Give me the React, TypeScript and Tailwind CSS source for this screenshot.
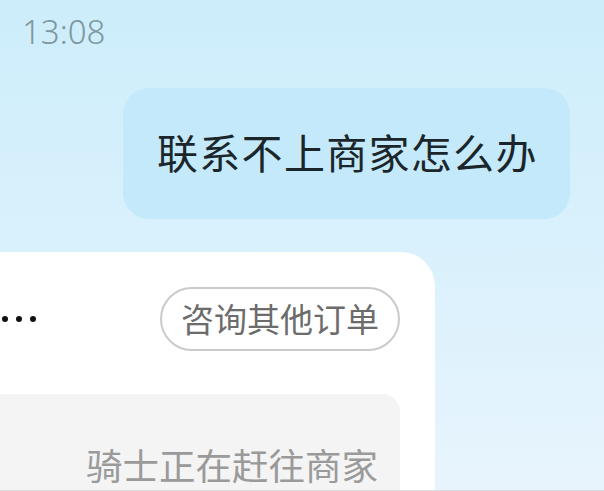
import React from "react";

const App: React.FC = () => {
  return (
    <div
      className="w-[604px] h-[491px] overflow-hidden flex flex-col bg-gradient-to-b from-[#cdedfb] via-[#d9f1fc] to-[#e8f4fd] border-b border-[#dcdcdc]"
      style={{ fontFamily: '"Noto Sans", "Noto Sans CJK SC", sans-serif' }}
    >
      <div className="pl-[22px] pt-[13px] h-[36px] flex items-center text-[33px] leading-none font-light text-[#7d979f] box-content">
        13:08
      </div>

      <div className="self-end mr-[34px] mt-[39px] w-[447px] h-[131px] rounded-[26px] bg-[#c3e9fb] flex items-center pl-[34px]">
        <span className="text-[41px] leading-none text-[#1b262b] tracking-[1.3px] -mt-[1px]">
          联系不上商家怎么办
        </span>
      </div>

      <div className="mt-[33px] w-[435px] flex-1 bg-white rounded-tr-[34px] flex flex-col">
        <div className="flex items-center justify-between pt-[35px] pr-[35px]">
          <div className="flex items-center gap-[8px] pl-[2px]">
            <span className="w-[6px] h-[6px] rounded-full bg-[#111]" />
            <span className="w-[6px] h-[6px] rounded-full bg-[#111]" />
            <span className="w-[6px] h-[6px] rounded-full bg-[#111]" />
          </div>
          <div className="w-[240px] h-[64px] rounded-full border-2 border-[#cacaca] flex items-center justify-center text-[33px] leading-none text-[#6c6c6c]">
            咨询其他订单
          </div>
        </div>

        <div className="mt-[43px] w-[400px] flex-1 bg-[#f4f4f4] rounded-tr-[18px] flex justify-end items-start pt-[54px] pr-[22px]">
          <span className="text-[36.5px] leading-none text-[#9a9a9a]">骑士正在赶往商家</span>
        </div>
      </div>
    </div>
  );
};

export default App;
